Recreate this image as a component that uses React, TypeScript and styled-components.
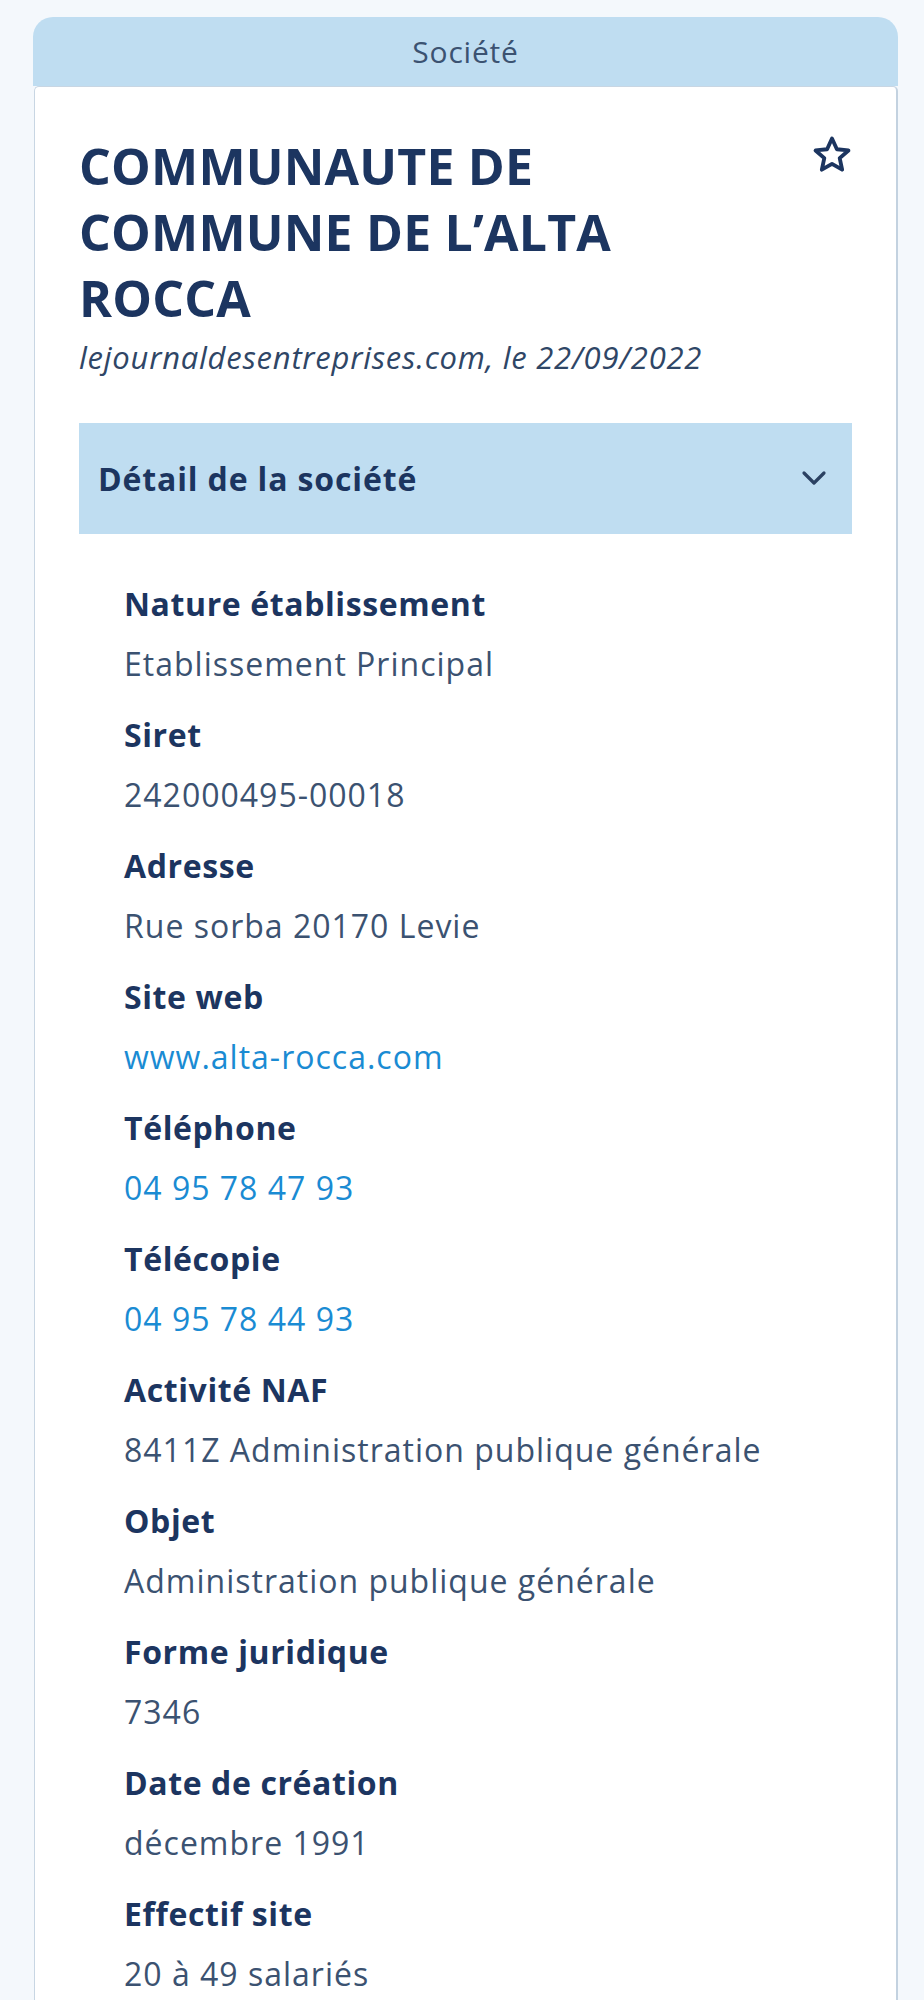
import styled, { createGlobalStyle } from 'styled-components';

const GlobalStyle = createGlobalStyle`
  html, body {
    margin: 0;
    padding: 0;
    background: #f4f8fc;
  }
  body {
    font-family: 'Open Sans', 'Noto Sans', sans-serif;
  }
`;

const Page = styled.div`
  padding: 17px 26px 0 33px;
`;

const Tab = styled.div`
  height: 69px;
  background: #bfddf1;
  border-radius: 20px 20px 0 0;
  display: flex;
  align-items: center;
  justify-content: center;
  font-size: 30px;
  letter-spacing: 0.8px;
  color: #3b5271;
`;

const Card = styled.div`
  margin: 0 0 0 1px;
  background: #ffffff;
  border: 1px solid #c8d6e3;
  border-right: 2px solid #c3d2e0;
  border-radius: 5px 5px 0 0;
  padding: 46px 44px 40px 44px;
`;

const Header = styled.div`
  display: flex;
  align-items: flex-start;
  justify-content: space-between;
`;

const Title = styled.h1`
  margin: 0;
  width: 690px;
  font-size: 50px;
  line-height: 66px;
  letter-spacing: 0.2px;
  font-weight: 700;
  color: #1c3560;
`;

const StarButton = styled.button`
  border: none;
  background: none;
  padding: 0;
  margin: 0 -2px 0 0;
  width: 44px;
  height: 44px;
  display: flex;
  align-items: center;
  justify-content: center;
  color: #1c3560;
`;

const Source = styled.p`
  margin: 6px 0 0;
  font-size: 31px;
  line-height: 40px;
  letter-spacing: 0.75px;
  font-style: italic;
  color: #2f4666;
`;

const AccordionHeader = styled.div`
  margin-top: 46px;
  height: 111px;
  background: #bfddf1;
  display: flex;
  align-items: center;
  justify-content: space-between;
  padding: 0 25px 0 19px;
`;

const AccordionTitle = styled.span`
  font-size: 32px;
  letter-spacing: 0.85px;
  font-weight: 700;
  color: #1c3560;
`;

const FieldList = styled.dl`
  margin: 48px 0 0;
  padding: 0 0 0 45px;
`;

const Label = styled.dt`
  font-size: 32px;
  line-height: 44px;
  letter-spacing: 0.6px;
  font-weight: 700;
  color: #1c3560;
  margin: 0 0 16px;
`;

const Value = styled.dd<{ $link?: boolean }>`
  margin: 0 0 27px;
  font-size: 32px;
  line-height: 44px;
  letter-spacing: 1px;
  color: ${({ $link }) => ($link ? '#1a8bd3' : '#3b5271')};
`;

const StarIcon = () => (
  <svg width="42" height="42" viewBox="0 0 24 24" fill="none" stroke="currentColor" strokeWidth="2.2" strokeLinejoin="round">
    <polygon points="12,2.6 14.8,8.7 21.4,9.4 16.4,13.8 17.8,20.4 12,17.1 6.2,20.4 7.6,13.8 2.6,9.4 9.2,8.7" />
  </svg>
);

const ChevronIcon = () => (
  <svg width="26" height="18" viewBox="0 0 26 18" fill="none" stroke="#2b4162" strokeWidth="3.2" strokeLinecap="round" strokeLinejoin="round">
    <polyline points="3,3 13,13 23,3" />
  </svg>
);

type Field = {
  label: string;
  value: string;
  link?: boolean;
};

const fields: Field[] = [
  { label: 'Nature établissement', value: 'Etablissement Principal' },
  { label: 'Siret', value: '242000495-00018' },
  { label: 'Adresse', value: 'Rue sorba 20170 Levie' },
  { label: 'Site web', value: 'www.alta-rocca.com', link: true },
  { label: 'Téléphone', value: '04 95 78 47 93', link: true },
  { label: 'Télécopie', value: '04 95 78 44 93', link: true },
  { label: 'Activité NAF', value: '8411Z Administration publique générale' },
  { label: 'Objet', value: 'Administration publique générale' },
  { label: 'Forme juridique', value: '7346' },
  { label: 'Date de création', value: 'décembre 1991' },
  { label: 'Effectif site', value: '20 à 49 salariés' },
];

export default function App() {
  return (
    <>
      <GlobalStyle />
      <Page>
        <Tab>Société</Tab>
        <Card>
          <Header>
            <Title>COMMUNAUTE DE COMMUNE DE L’ALTA ROCCA</Title>
            <StarButton aria-label="Ajouter aux favoris">
              <StarIcon />
            </StarButton>
          </Header>
          <Source>lejournaldesentreprises.com, le 22/09/2022</Source>
          <AccordionHeader>
            <AccordionTitle>Détail de la société</AccordionTitle>
            <ChevronIcon />
          </AccordionHeader>
          <FieldList>
            {fields.map(({ label, value, link }) => (
              <div key={label}>
                <Label>{label}</Label>
                <Value $link={link}>{value}</Value>
              </div>
            ))}
          </FieldList>
        </Card>
      </Page>
    </>
  );
}
